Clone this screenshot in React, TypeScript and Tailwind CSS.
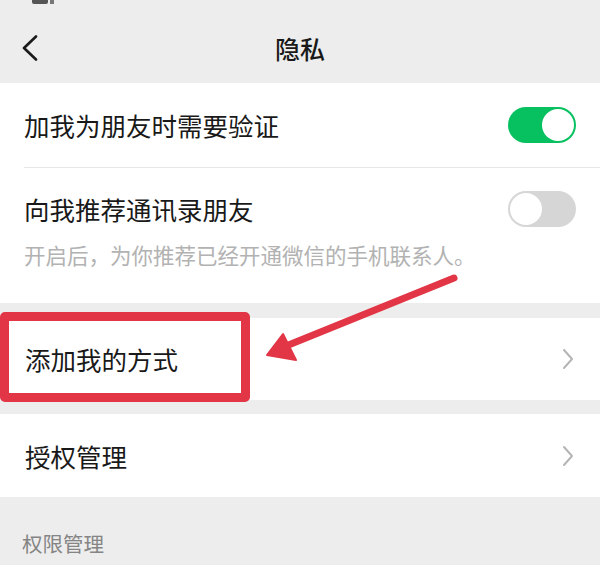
import React from 'react'

const font = { fontFamily: '"Noto Sans CJK SC", "Noto Sans", sans-serif' }

function Toggle({ on }: { on: boolean }) {
  return on ? (
    <div className="w-[68px] h-[36px] rounded-full bg-[#07c160] flex items-center justify-end px-[2px]">
      <div className="w-[32px] h-[32px] rounded-full bg-white" />
    </div>
  ) : (
    <div className="w-[68px] h-[36px] rounded-full bg-[#d6d6d6] flex items-center justify-start px-[2px]">
      <div className="w-[32px] h-[32px] rounded-full bg-white" />
    </div>
  )
}

function Chevron() {
  return (
    <svg width="12" height="22" viewBox="0 0 12 22" className="mr-[26px]">
      <path d="M2 2 L10 11 L2 20" fill="none" stroke="#b5b5b5" strokeWidth="2" strokeLinecap="round" strokeLinejoin="round" />
    </svg>
  )
}

export default function App() {
  return (
    <div className="relative w-[600px] h-[588px] overflow-hidden bg-white text-[#191919]" style={font}>
      {/* header */}
      <div className="relative bg-[#ededed] h-[83px] pt-[13px]">
        <div className="absolute left-[32px] top-[-7px] flex gap-[2px]">
          <div className="w-[16px] h-[11px] rounded-[2px] bg-[#555]" />
          <div className="w-[4px] h-[9px] bg-[#777] mt-[2px]" />
        </div>
        <div className="grid grid-cols-[1fr_auto_1fr] items-center h-full">
          <div className="pl-[22px] flex items-center">
            <svg width="16" height="26" viewBox="0 0 16 26">
              <path d="M14 1.5 L2 13 L14 24.5" fill="none" stroke="#1a1a1a" strokeWidth="2.6" strokeLinecap="round" strokeLinejoin="round" />
            </svg>
          </div>
          <div className="text-[25px] leading-[32px] font-medium">隐私</div>
          <div />
        </div>
      </div>

      {/* verification group */}
      <div className="bg-white">
        <div className="h-[84px] flex items-center justify-between pl-[24px] pr-[24px]">
          <span className="text-[25.5px] leading-[36px]">加我为朋友时需要验证</span>
          <Toggle on />
        </div>
        <div className="ml-[24px] border-t border-[#e6e6e6]" />
        <div className="pt-[23px] pb-[34px] pl-[24px] pr-[24px]">
          <div className="flex items-center justify-between">
            <span className="text-[25.5px] leading-[36px]">向我推荐通讯录朋友</span>
            <Toggle on={false} />
          </div>
          <div className="mt-[14px] text-[21.5px] leading-[28px] text-[#b2b2b2]">开启后，为你推荐已经开通微信的手机联系人。</div>
        </div>
      </div>

      <div className="h-[15px] bg-[#ededed]" />
      <div className="h-[82px] flex items-center justify-between pl-[25px]">
        <span className="text-[25.5px] leading-[36px]">添加我的方式</span>
        <Chevron />
      </div>
      <div className="h-[14px] bg-[#ededed]" />
      <div className="h-[83px] flex items-center justify-between pl-[25px]">
        <span className="text-[25.5px] leading-[36px]">授权管理</span>
        <Chevron />
      </div>
      <div className="h-[68px] bg-[#ededed] pt-[32px] pl-[22px]">
        <div className="text-[20.5px] leading-[28px] text-[#858585]">权限管理</div>
      </div>

      {/* annotation */}
      <div className="absolute left-0 top-[312px] w-[250px] h-[90px] border-[9px] border-[#e23646] rounded-[5px]" />
      <svg className="absolute left-0 top-0 pointer-events-none" width="600" height="588">
        <line x1="454" y1="278" x2="286" y2="346" stroke="#e23646" strokeWidth="7" strokeLinecap="round" />
        <polygon points="267,355 283,334 296,360" fill="#e23646" stroke="#e23646" strokeWidth="2" strokeLinejoin="round" />
      </svg>
    </div>
  )
}
